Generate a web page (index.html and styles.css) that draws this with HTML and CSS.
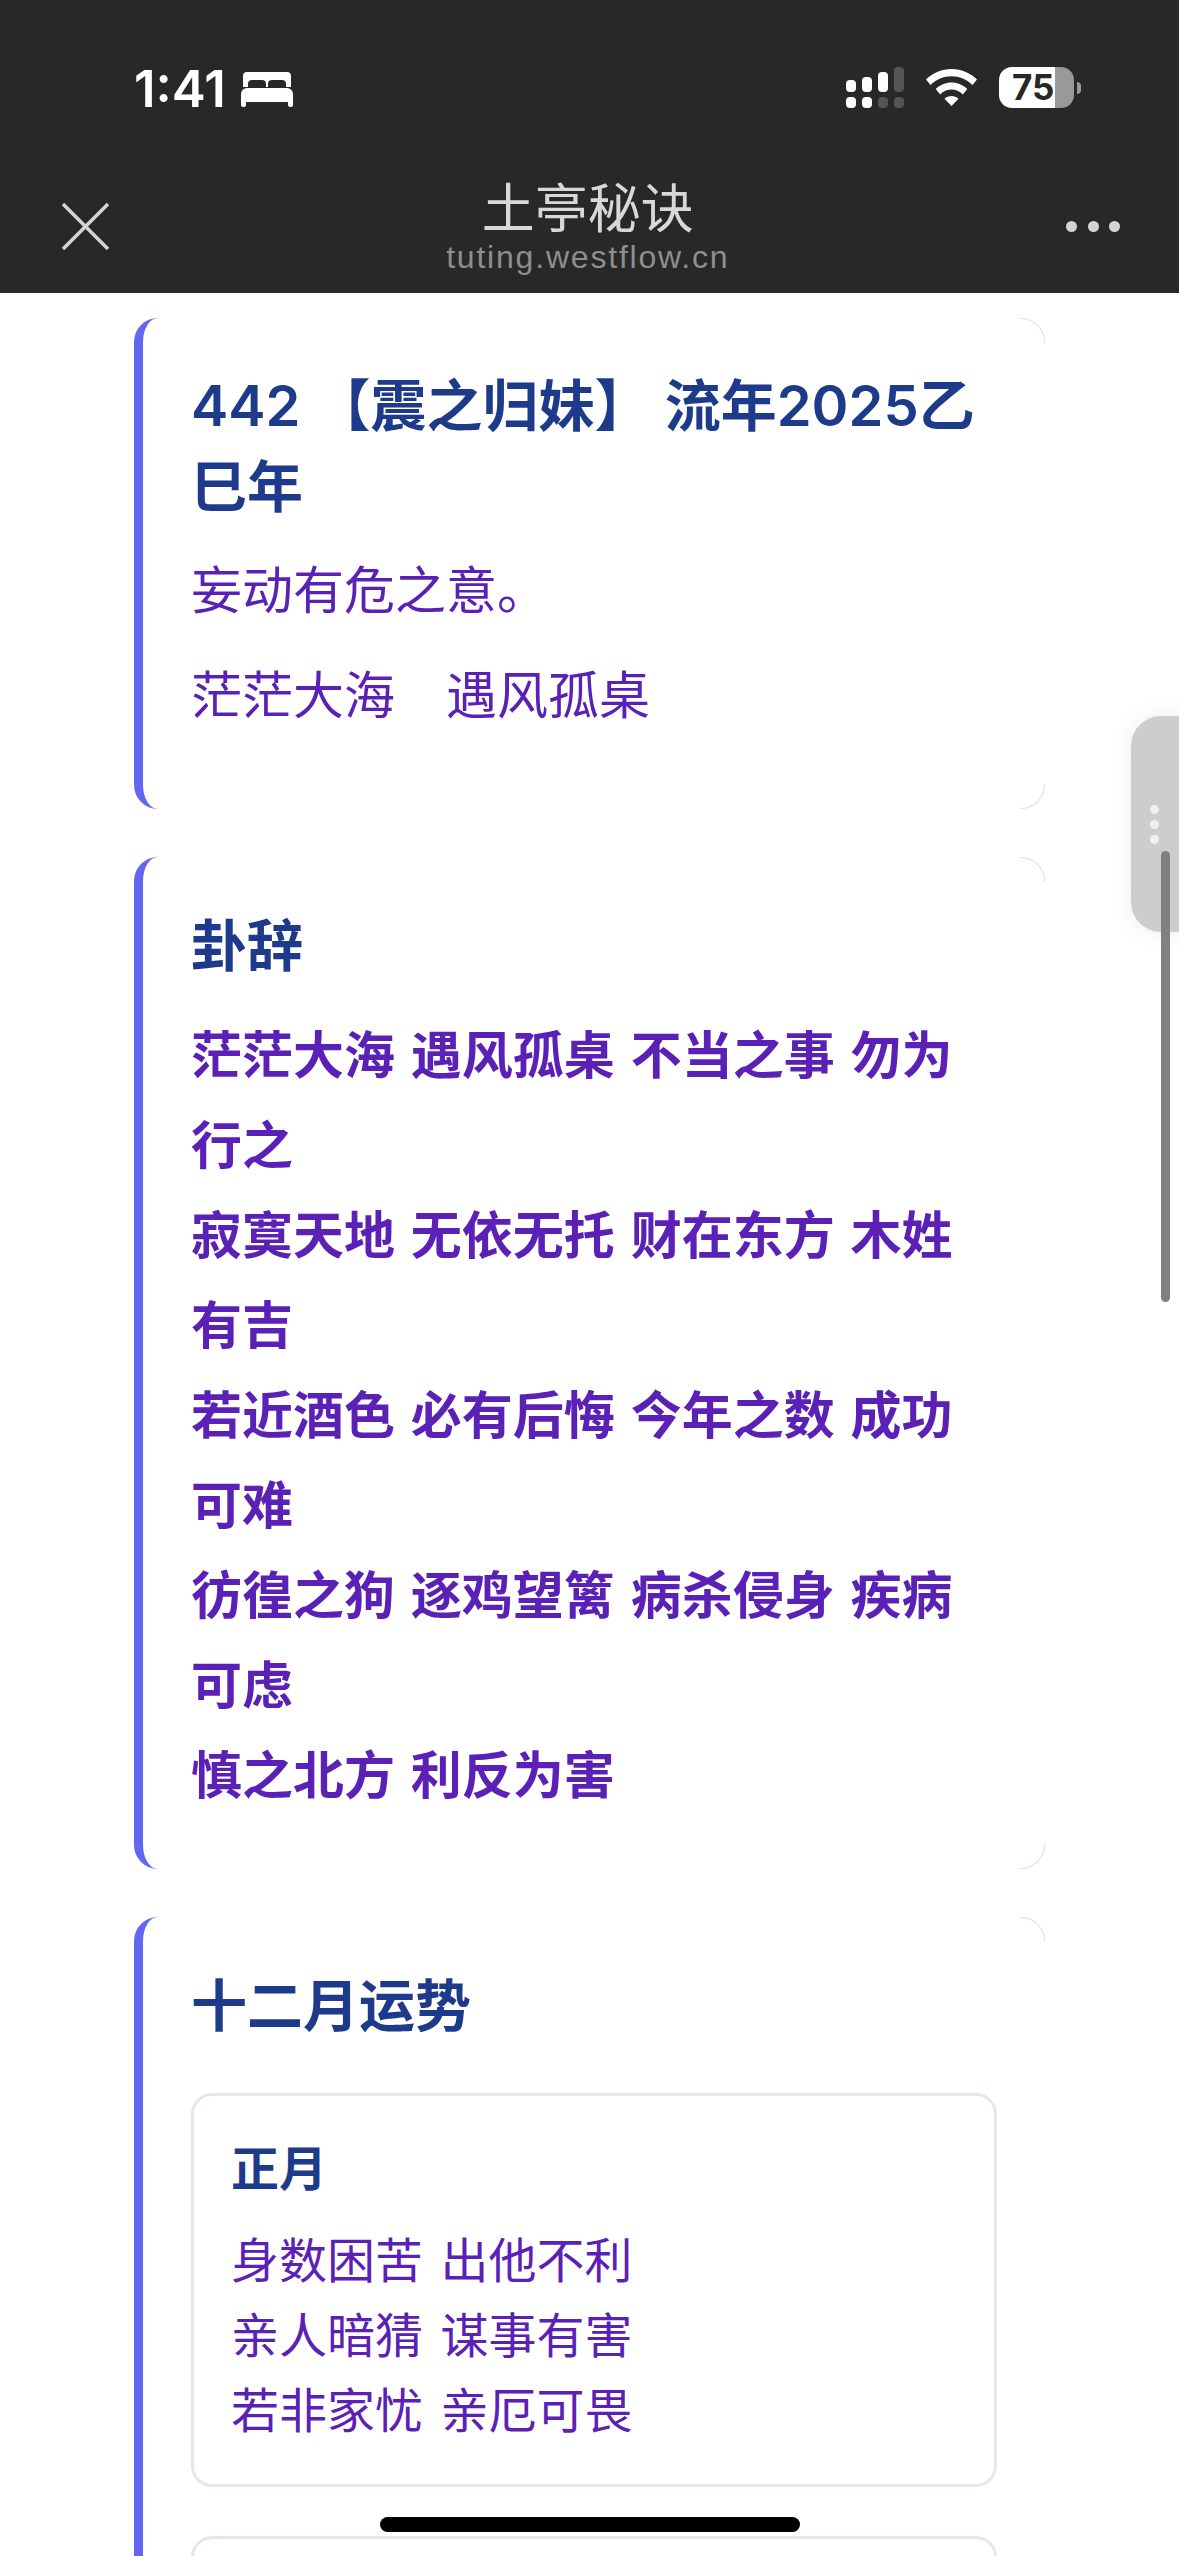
FILE: index.html
```html
<!DOCTYPE html>
<html>
<head>
    <meta charset="UTF-8">
    <title>土亭秘诀</title>
    <link rel="stylesheet" href="styles.css">
</head>
<body>
    <div id="phone">
        <div id="header">
            <div id="status">
                <div id="status_left">
                    <span id="clock">1:41</span>
                    <svg class="bed" width="52" height="35" viewBox="0 0 52 35">
                        <path fill="#fff" d="M6 0h40a4 4 0 0 1 4 4v11h-5v-3a4 4 0 0 0-4-4H31a4 4 0 0 0-4 4v3h-2v-3a4 4 0 0 0-4-4H11a4 4 0 0 0-4 4v3H2V4a4 4 0 0 1 4-4z"/>
                        <path fill="#fff" d="M6 16h40a6 6 0 0 1 6 6v11a2 2 0 0 1-2 2h-1a2 2 0 0 1-2-2v-3H5v3a2 2 0 0 1-2 2H2a2 2 0 0 1-2-2V22a6 6 0 0 1 6-6z"/>
                    </svg>
                </div>
                <div id="status_right">
                    <svg width="58" height="41" viewBox="0 0 58 41">
                        <rect x="0" y="13" width="10" height="12" rx="4" fill="#fff"/>
                        <rect x="16" y="10" width="10" height="15" rx="4" fill="#fff"/>
                        <rect x="32" y="5" width="10" height="20" rx="4" fill="#fff"/>
                        <rect x="48" y="0" width="10" height="25" rx="4" fill="#555"/>
                        <rect x="0" y="30" width="10" height="11" rx="4" fill="#fff"/>
                        <rect x="16" y="30" width="10" height="11" rx="4" fill="#fff"/>
                        <rect x="32" y="30" width="10" height="11" rx="4" fill="#555"/>
                        <rect x="48" y="30" width="10" height="11" rx="4" fill="#555"/>
                    </svg>
                    <svg class="wifi" width="51" height="37" viewBox="0 0 51 37">
                        <path fill="#fff" d="M25.5 0C35 0 44 3.800 51 10.500l-4.500 5.500C40.800 10.300 33.400 7.200 25.500 7.200S10.200 10.300 4.500 16L0 10.500C7 3.800 16 0 25.500 0z"/>
                        <path fill="#fff" d="M25.500 13.500c6 0 11.500 2.400 15.800 6.500l-4.500 5.400c-3-3-7-4.800-11.300-4.800s-8.300 1.800-11.300 4.800L9.700 20c4.300-4.100 9.800-6.500 15.800-6.500z"/>
                        <path fill="#fff" d="M25.500 27c2.700 0 5.100 1 7 2.800L25.500 37l-7-7.200c1.900-1.800 4.300-2.800 7-2.800z"/>
                    </svg>
                    <div id="battery">
                        <div id="battery_body"><span>75</span></div>
                        <div id="battery_nub"></div>
                    </div>
                </div>
            </div>
            <div id="nav">
                <svg width="47" height="47" viewBox="0 0 47 47">
                    <path d="M1 1L46 46M46 1L1 46" stroke="#d4d4d4" stroke-width="3.500" fill="none"/>
                </svg>
                <div id="nav_title">
                    <p id="site_name">土亭秘诀</p>
                    <p id="site_url">tuting.westflow.cn</p>
                </div>
                <div id="nav_more">
                    <i></i><i></i><i></i>
                </div>
            </div>
        </div>

        <div id="content">
            <div class="card">
                <h2 class="title">442 【震之归妹】 流年2025乙巳年</h2>
                <p class="intro">妄动有危之意。</p>
                <p class="intro verse">茫茫大海　遇风孤桌</p>
            </div>

            <div class="card">
                <h3 class="title">卦辞</h3>
                <p class="poem">茫茫大海 遇风孤桌 不当之事 勿为行之<br>寂寞天地 无依无托 财在东方 木姓有吉<br>若近酒色 必有后悔 今年之数 成功可难<br>彷徨之狗 逐鸡望篱 病杀侵身 疾病可虑<br>慎之北方 利反为害</p>
            </div>

            <div class="card">
                <h3 class="title">十二月运势</h3>
                <div class="month">
                    <h4>正月</h4>
                    <p>身数困苦 出他不利<br>亲人暗猜 谋事有害<br>若非家忧 亲厄可畏</p>
                </div>
                <div class="month"></div>
            </div>
        </div>

        <div id="float_handle"><i></i><i></i><i></i></div>
        <div id="scrollbar"></div>
        <div id="home_bar"></div>
    </div>
</body>
</html>
```

FILE: styles.css
```css
*{
    padding: 0;
    margin: 0;
    box-sizing: border-box;
}

html,body{
    background: #fff;
}

#phone{
    position: relative;
    width: 1179px;
    height: 2556px;
    overflow: hidden;
    background: #fff;
    font-family: Inter, "Noto Sans CJK SC", sans-serif;
}

/* 顶部深色区域 */
#header{
    height: 293px;
    background: #282828;
    padding: 67px 98px 0 62px;
}

#status{
    display: flex;
    justify-content: space-between;
    align-items: flex-start;
    height: 41px;
    padding-left: 72px;
}

#status_left{
    display: flex;
    align-items: center;
    gap: 15px;
    padding-top: 2px;
}

#clock{
    font-size: 51px;
    line-height: 37px;
    font-weight: 600;
    color: #fff;
}

.bed{
    display: block;
    margin-top: 3px;
}

#status_right{
    display: flex;
    align-items: flex-start;
    gap: 22px;
}

.wifi{
    margin-top: 2px;
}

#battery{
    display: flex;
    align-items: center;
    gap: 3px;
}

#battery_body{
    width: 75px;
    height: 41px;
    border-radius: 13px;
    background: linear-gradient(to right, #fff 56px, #999 56px);
}

#battery_body span{
    display: block;
    width: 56px;
    padding-left: 13px;
    font-size: 35px;
    line-height: 41px;
    font-weight: 700;
    color: #282828;
}

#battery_nub{
    width: 4px;
    height: 12px;
    border-radius: 0 6px 6px 0;
    background: #999;
}

#nav{
    display: flex;
    justify-content: space-between;
    align-items: flex-start;
    margin-top: 76px;
}

#nav svg{
    display: block;
    margin-top: 19px;
}

#nav_title{
    text-align: center;
    margin-top: -5px;
}

#site_name{
    font-size: 53px;
    line-height: 60px;
    color: #d8d8d8;
}

#site_url{
    font-family: "Liberation Sans", sans-serif;
    font-size: 32px;
    line-height: 36px;
    color: #8e8e8e;
    letter-spacing: 1.800px;
}

#nav_more{
    display: flex;
    gap: 10.500px;
    margin-top: 37px;
    margin-right: -39.500px;
}

#nav_more i{
    display: block;
    width: 11px;
    height: 11px;
    border-radius: 50%;
    background: #d4d4d4;
}

/* 内容卡片 */
#content{
    width: 911px;
    margin: 0 auto;
    padding-top: 25px;
}

.card{
    position: relative;
    background: #fff;
    border-left: 9px solid #6366f1;
    border-radius: 24px;
    padding: 48px;
    margin-bottom: 48px;
}

/* 右边两个角上很淡的弧线 */
.card:before,
.card:after{
    content: "";
    position: absolute;
    right: 0;
    width: 24px;
    height: 24px;
    border-right: 1px solid #dcdcfb;
}

.card:before{
    top: 0;
    border-top: 1px solid #dcdcfb;
    border-top-right-radius: 24px;
}

.card:after{
    bottom: 0;
    border-bottom: 1px solid #dcdcfb;
    border-bottom-right-radius: 24px;
}

.title{
    font-size: 56px;
    line-height: 81px;
    font-weight: 600;
    color: #1e3a8a;
}

h3.title{
    padding-top: 1px;
}

.intro{
    font-size: 51px;
    line-height: 90px;
    color: #5b21b6;
    margin-top: 18px;
}

.intro.verse{
    margin-top: 15px;
    margin-bottom: 20px;
}

.poem{
    font-size: 51px;
    line-height: 90px;
    font-weight: 600;
    word-spacing: 3px;
    color: #5b21b6;
    margin-top: 24px;
}

.month{
    border: 3px solid #e2e8f0;
    border-radius: 21px;
    padding: 37px 37px 48px;
    margin-top: 46px;
    height: 394px;
}

.month + .month{
    margin-top: 49px;
}

.month h4{
    font-size: 48px;
    line-height: 72px;
    font-weight: 700;
    color: #1e3a8a;
}

.month p{
    font-size: 48px;
    line-height: 75px;
    word-spacing: 4px;
    color: #5b21b6;
    margin-top: 18px;
}

/* 右侧悬浮把手和滚动条 */
#float_handle{
    position: absolute;
    left: 1131px;
    top: 716px;
    width: 60px;
    height: 216px;
    border-radius: 30px 0 0 30px;
    background: #cdcdcd;
    box-shadow: 0 0 24px rgba(0,0,0,.08);
    display: flex;
    flex-direction: column;
    gap: 6px;
    padding: 89px 0 0 19px;
}

#float_handle i{
    display: block;
    width: 9px;
    height: 9px;
    border-radius: 50%;
    background: #f0f0f0;
}

#scrollbar{
    position: absolute;
    left: 1161px;
    top: 851px;
    width: 9px;
    height: 451px;
    border-radius: 5px;
    background: #808080;
}

#home_bar{
    position: absolute;
    left: 380px;
    top: 2517px;
    width: 420px;
    height: 15px;
    border-radius: 8px;
    background: #000;
}
```
